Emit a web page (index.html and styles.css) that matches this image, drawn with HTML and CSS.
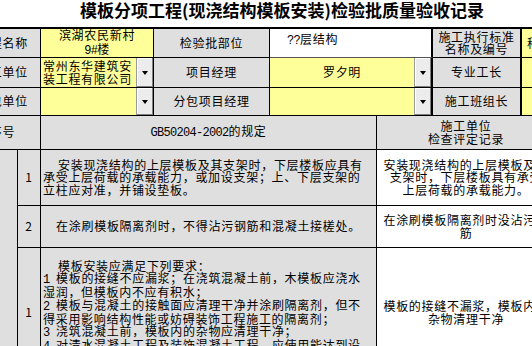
FILE: index.html
```html
<!DOCTYPE html>
<html lang="zh">
<head>
<meta charset="utf-8">
<title>模板分项工程检验批质量验收记录</title>
<link rel="stylesheet" href="styles.css">
</head>
<body>
<div class="title">模板分项工程(现浇结构模板安装)检验批质量验收记录</div>
<div class="sheet">
  <div class="top">
    <div class="c lab"><span class="v">工程名称</span></div>
    <div class="c yel"><span class="v loose">滨湖农民新村<br><span class="m">9#</span>楼</span></div>
    <div class="c lab"><span class="v">检验批部位</span></div>
    <div class="c box"><span class="v"><span class="m">??</span>层结构</span></div>
    <div class="c lab thick"><span class="v">施工执行标准<br>名称及编号</span></div>
    <div class="c yel lft"><span class="v">称</span></div>

    <div class="c lab"><span class="v">施工单位</span></div>
    <div class="c yel dd"><span class="ddtext lft"><span class="v">常州东华建筑安<br>装工程有限公司</span></span><span class="btn"><i></i></span></div>
    <div class="c lab"><span class="v">项目经理</span></div>
    <div class="c yel dd thick"><span class="ddtext"><span class="v">罗夕明</span></span><span class="btn"><i></i></span></div>
    <div class="c lab thick"><span class="v">专业工长</span></div>
    <div class="c yel"></div>

    <div class="c lab"><span class="v">分包单位</span></div>
    <div class="c yel dd"><span class="ddtext"></span><span class="btn"><i></i></span></div>
    <div class="c lab"><span class="v">分包项目经理</span></div>
    <div class="c yel dd thick"><span class="ddtext"></span><span class="btn"><i></i></span></div>
    <div class="c lab thick"><span class="v">施工班组长</span></div>
    <div class="c yel"></div>
  </div>
  <div class="bottom">
    <div class="c lab span2"><span class="v">序号</span></div>
    <div class="c lab"><span class="v"><span class="m">GB50204-2002</span>的规定</span></div>
    <div class="c lab"><span class="v">施工单位<br>检查评定记录</span></div>

    <div class="c lab merged"></div>
    <div class="c lab"><span class="v">1</span></div>
    <div class="c lab txt"><span class="v"><span class="ind"></span>安装现浇结构的上层模板及其支架时，下层楼板应具有<br>承受上层荷载的承载能力，或加设支架；上、下层支架的<br>立柱应对准，并铺设垫板。</span></div>
    <div class="c wht"><span class="v">安装现浇结构的上层模板及其<br>支架时，下层楼板具有承受<br>上层荷载的承载能力。</span></div>

    <div class="c lab"><span class="v">2</span></div>
    <div class="c lab"><span class="v">在涂刷模板隔离剂时，不得沾污钢筋和混凝土接槎处。</span></div>
    <div class="c wht"><span class="v">在涂刷模板隔离剂时没沾污钢<br>筋</span></div>

    <div class="c lab"><span class="v">1</span></div>
    <div class="c lab txt top-al"><span class="v"><span class="ind"></span>模板安装应满足下列要求：<br><span class="m">1 </span>模板的接缝不应漏浆；在浇筑混凝土前，木模板应浇水<br>湿润，但模板内不应有积水；<br><span class="m">2 </span>模板与混凝土的接触面应清理干净并涂刷隔离剂，但不<br>得采用影响结构性能或妨碍装饰工程施工的隔离剂；<br><span class="m">3 </span>浇筑混凝土前，模板内的杂物应清理干净；<br><span class="m">4 </span>对清水混凝土工程及装饰混凝土工程，应使用能达到设<br>计效果的模板。</span></div>
    <div class="c wht"><span class="v">模板的接缝不漏浆，模板内的<br>杂物清理干净</span></div>
  </div>
</div>
</body>
</html>
```

FILE: styles.css
```css
html, body {
  margin: 0;
  padding: 0;
  background: #ffffff;
  overflow: hidden;
}
body {
  width: 532px;
  height: 346px;
  font-family: "Noto Sans CJK SC", "Noto Sans CJK JP", sans-serif;
  font-size: 12px;
  letter-spacing: 0.7px;
  line-height: 12.2px;
  color: #000;
}
.title {
  box-sizing: border-box;
  width: 532px;
  height: 27px;
  padding-left: 32px;
  text-align: center;
  font-weight: bold;
  font-size: 17px;
  letter-spacing: 0;
  line-height: 20px;
  white-space: nowrap;
}
.sheet {
  margin-left: -35px;
  width: 640px;
}
.top {
  display: grid;
  grid-template-columns: 76px 113px 116px 163px 89px 83px;
  grid-template-rows: 29px 30px 28px;
  border-top: 2px solid #000;
}
.bottom {
  display: grid;
  grid-template-columns: 53px 23px 336px 179px;
  grid-template-rows: 34px 56px 42px 130px;
}
.c {
  box-sizing: border-box;
  border-right: 1px solid #000;
  border-bottom: 1px solid #000;
  display: flex;
  align-items: center;
  justify-content: center;
  text-align: center;
  white-space: nowrap;
  overflow: hidden;
}
.v {
  display: block;
}
.loose {
  line-height: 13.5px;
}
.thick {
  border-right-width: 2px;
}
.lab {
  background: #dfdfdf;
}
.yel {
  background: #ffff99;
}
.wht {
  background: #ffffff;
}
.lft {
  justify-content: flex-start;
  text-align: left;
  padding-left: 5px;
}
.box {
  background: #ffffff;
  border-right: 2px solid #000;
  border-bottom: 1px solid #555;
  align-items: flex-start;
  justify-content: flex-start;
  text-align: left;
  padding: 4px 0 0 17px;
}
.dd {
  justify-content: stretch;
  align-items: stretch;
}
.ddtext {
  flex: 1;
  display: flex;
  align-items: center;
  justify-content: center;
}
.ddtext.lft {
  justify-content: flex-start;
  padding-left: 2px;
}
.btn {
  width: 17px;
  flex: none;
  box-sizing: border-box;
  background: #ececec;
  border-left: 1px solid #9a9a9a;
  box-shadow: inset -1px -1px 0 #808080, inset 1px 1px 0 #ffffff;
  display: flex;
  align-items: center;
  justify-content: center;
}
.btn i {
  display: block;
  width: 0;
  height: 0;
  border-left: 3.5px solid transparent;
  border-right: 3.5px solid transparent;
  border-top: 4px solid #000;
}
.span2 {
  grid-column: span 2;
}
.merged {
  grid-row: span 3;
}
.txt {
  justify-content: flex-start;
  text-align: left;
  padding-left: 2px;
}
.top-al {
  align-items: flex-start;
  padding-top: 12px;
}
.ind {
  display: inline-block;
  width: 15px;
}
.m {
  font-family: "Liberation Mono", monospace;
  font-size: 12px;
  letter-spacing: -0.7px;
}
```
